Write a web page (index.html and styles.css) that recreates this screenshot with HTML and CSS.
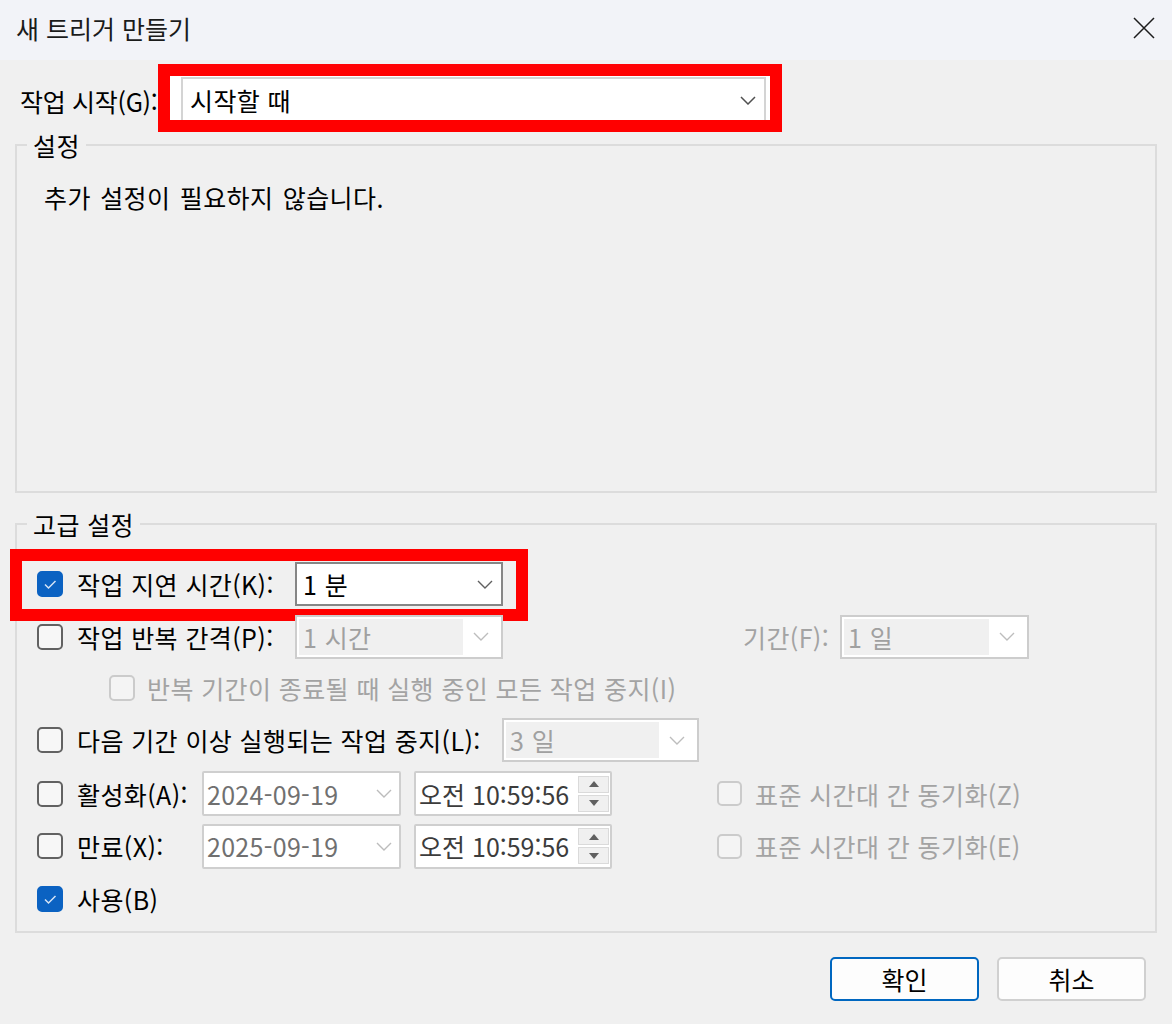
FILE: index.html
```html
<!DOCTYPE html>
<html lang="ko">
<head>
<meta charset="utf-8">
<title>새 트리거 만들기</title>
<link rel="stylesheet" href="styles.css">
</head>
<body>
<div class="dialog">
  <header class="titlebar">
    <span class="title">새 트리거 만들기</span>
    <svg class="close" width="22" height="22" viewBox="0 0 22 22"><path d="M1 1 L21 21 M21 1 L1 21" stroke="#1c1c1c" stroke-width="1.5" fill="none"/></svg>
  </header>
  <main class="content">
    <div class="start-row">
      <span class="start-label">작업 시작(G):</span>
      <div class="hl-combo">
        <div class="combo-main">
          <span>시작할 때</span>
          <svg class="chev" width="16" height="9" viewBox="0 0 16 9"><path d="M1 1 L8 8 L15 1" stroke="#505050" stroke-width="1.5" fill="none"/></svg>
        </div>
      </div>
    </div>

    <fieldset class="group group-settings">
      <legend>설정</legend>
      <div class="group-body settings-body">
        <p class="note">추가 설정이 필요하지 않습니다.</p>
      </div>
    </fieldset>

    <fieldset class="group group-adv">
      <legend>고급 설정</legend>
      <div class="group-body adv-body">
        <div class="row r1">
          <span class="cb checked"><svg width="22" height="22" viewBox="0 0 22 22"><path d="M6 11.5 L9.5 15 L16.5 8" stroke="#d6e4f5" stroke-width="1.5" fill="none"/></svg></span>
          <span class="lbl w-delay">작업 지연 시간(K):</span>
          <div class="combo combo-delay">
            <span>1 분</span>
            <svg class="chev" width="16" height="9" viewBox="0 0 16 9"><path d="M1 1 L8 8 L15 1" stroke="#606060" stroke-width="1.4" fill="none"/></svg>
          </div>
          <div class="hl-row"></div>
        </div>

        <div class="row r2">
          <span class="cb"></span>
          <span class="lbl w-delay">작업 반복 간격(P):</span>
          <div class="combo dis w208">
            <span class="field">1 시간</span>
            <span class="chev-area"><svg width="16" height="9" viewBox="0 0 16 9"><path d="M1 1 L8 8 L15 1" stroke="#bdbdbd" stroke-width="1.4" fill="none"/></svg></span>
          </div>
          <span class="lbl gray w-period">기간(F):</span>
          <div class="combo dis w189">
            <span class="field">1 일</span>
            <span class="chev-area"><svg width="16" height="9" viewBox="0 0 16 9"><path d="M1 1 L8 8 L15 1" stroke="#bdbdbd" stroke-width="1.4" fill="none"/></svg></span>
          </div>
        </div>

        <div class="row r3">
          <span class="cb disabled"></span>
          <span class="lbl gray">반복 기간이 종료될 때 실행 중인 모든 작업 중지(I)</span>
        </div>

        <div class="row r4">
          <span class="cb"></span>
          <span class="lbl w-stop">다음 기간 이상 실행되는 작업 중지(L):</span>
          <div class="combo dis w197">
            <span class="field">3 일</span>
            <span class="chev-area"><svg width="16" height="9" viewBox="0 0 16 9"><path d="M1 1 L8 8 L15 1" stroke="#bdbdbd" stroke-width="1.4" fill="none"/></svg></span>
          </div>
        </div>

        <div class="row r5">
          <span class="cb"></span>
          <span class="lbl w-date">활성화(A):</span>
          <div class="date">
            <span class="num">2024-09-19</span>
            <svg width="16" height="9" viewBox="0 0 16 9"><path d="M1 1 L8 8 L15 1" stroke="#bcbcbc" stroke-width="1.4" fill="none"/></svg>
          </div>
          <div class="time">
            <span class="num">오전 10:59:56</span>
            <span class="spin">
              <span class="spin-btn"><svg width="10" height="6" viewBox="0 0 10 6"><path d="M0 6 L5 0 L10 6 Z" fill="#606060"/></svg></span>
              <span class="spin-btn"><svg width="10" height="6" viewBox="0 0 10 6"><path d="M0 0 L5 6 L10 0 Z" fill="#606060"/></svg></span>
            </span>
          </div>
          <span class="cb disabled sync"></span>
          <span class="lbl gray">표준 시간대 간 동기화(Z)</span>
        </div>

        <div class="row r6">
          <span class="cb"></span>
          <span class="lbl w-date">만료(X):</span>
          <div class="date">
            <span class="num">2025-09-19</span>
            <svg width="16" height="9" viewBox="0 0 16 9"><path d="M1 1 L8 8 L15 1" stroke="#bcbcbc" stroke-width="1.4" fill="none"/></svg>
          </div>
          <div class="time">
            <span class="num">오전 10:59:56</span>
            <span class="spin">
              <span class="spin-btn"><svg width="10" height="6" viewBox="0 0 10 6"><path d="M0 6 L5 0 L10 6 Z" fill="#606060"/></svg></span>
              <span class="spin-btn"><svg width="10" height="6" viewBox="0 0 10 6"><path d="M0 0 L5 6 L10 0 Z" fill="#606060"/></svg></span>
            </span>
          </div>
          <span class="cb disabled sync"></span>
          <span class="lbl gray">표준 시간대 간 동기화(E)</span>
        </div>

        <div class="row r7">
          <span class="cb checked"><svg width="22" height="22" viewBox="0 0 22 22"><path d="M6 11.5 L9.5 15 L16.5 8" stroke="#d6e4f5" stroke-width="1.5" fill="none"/></svg></span>
          <span class="lbl">사용(B)</span>
        </div>
      </div>
    </fieldset>

    <div class="buttons">
      <button class="btn btn-primary">확인</button>
      <button class="btn">취소</button>
    </div>
  </main>
</div>
</body>
</html>
```
FILE: styles.css
```css
* { box-sizing: border-box; }
html, body { margin: 0; padding: 0; }
body {
  width: 1172px;
  height: 1024px;
  overflow: hidden;
  background: #f0f0f0;
  font-family: "Noto Sans CJK KR", "Noto Sans", sans-serif;
  font-size: 25px;
  letter-spacing: 0.4px;
  color: #000;
}

.titlebar {
  height: 60px;
  background: #f2f3f8;
  display: flex;
  align-items: center;
  justify-content: space-between;
  padding: 0 17px 4px 16px;
}
.title {
  line-height: 24px;
  letter-spacing: 0;
  color: #1b1b1b;
}
.close { display: block; }

.content { padding: 4px 15px 0; }

.start-row {
  display: flex;
  align-items: center;
  margin-left: 5px;
}
.start-label {
  width: 138px;
  line-height: 24px;
  padding-top: 6px;
  white-space: nowrap;
  letter-spacing: -0.3px;
}
.hl-combo {
  width: 624px;
  height: 68px;
  border: 12px solid #ff0000;
  background: #fff;
  overflow: hidden;
  padding: 1px 4px 0 11px;
}
.combo-main {
  height: 46px;
  border: 2px solid #d4d4d4;
  background: #fff;
  display: flex;
  align-items: center;
  justify-content: space-between;
  padding: 0 8px 0 7px;
  line-height: 24px;
}
.chev { display: block; }

.group {
  margin: 0;
  padding: 0;
  min-width: 0;
  border: 2px solid #dcdcdc;
}
.group legend {
  margin-left: 10px;
  padding: 0 6px;
  line-height: 24px;
}
.group-settings { margin-top: 1px; }
.settings-body {
  height: 334px;
  padding: 25px 0 0 27px;
}
.note { margin: 0; line-height: 30px; word-spacing: 2px; }

.group-adv { margin-top: 19px; }
.adv-body {
  height: 395px;
  padding: 21px 0 0 20px;
  display: flex;
  flex-direction: column;
}

.row {
  display: flex;
  align-items: center;
  position: relative;
}
.r1 { height: 54px; }
.r2 { height: 51px; }
.r3 { height: 51px; padding-left: 72px; }
.r4 { height: 54px; }
.r5 { height: 53px; }
.r6 { height: 52px; }
.r7 { height: 54px; }

.cb {
  flex: none;
  width: 26px;
  height: 26px;
  border: 2px solid #626262;
  border-radius: 5px;
  background: #f7f7f7;
  margin-right: 14px;
  display: flex;
  align-items: center;
  justify-content: center;
}
.cb svg { display: block; }
.cb.checked { background: #0b62c2; border-color: #0b62c2; }
.cb.disabled { border-color: #cbcbcb; background: #f4f4f4; }
.r3 .cb { margin-right: 12px; }
.cb.sync { width: 25px; height: 25px; margin-left: 105px; margin-right: 13px; }

.lbl { line-height: 24px; white-space: nowrap; flex: none; }
.gray { color: #a3a3a3; }
.w-delay { width: 218px; }
.w-period { width: 97px; margin-left: 240px; }
.w-stop { width: 425px; }
.w-date { width: 125px; }

.combo {
  flex: none;
  height: 44px;
  border: 2px solid #cdcdcd;
  background: #fff;
  display: flex;
  line-height: 24px;
}
.combo-delay {
  width: 208px;
  border-color: #868686;
  align-items: center;
  justify-content: space-between;
  padding: 0 8px 0 6px;
}
.combo.dis { padding: 2px; }
.w208 { width: 208px; }
.w189 { width: 189px; }
.w197 { width: 197px; }
.field {
  flex: 1;
  background: #f0f0f0;
  color: #a0a0a0;
  display: flex;
  align-items: center;
  padding-left: 4px;
}
.chev-area {
  width: 36px;
  flex: none;
  display: flex;
  align-items: center;
  justify-content: center;
}
.chev-area svg { display: block; }

.date, .time {
  flex: none;
  height: 45px;
  border: 2px solid #cfcfcf;
  border-radius: 2px;
  background: #fff;
  display: flex;
  align-items: center;
  justify-content: space-between;
  line-height: 24px;
}
.date {
  width: 199px;
  padding: 0 7px 0 3px;
  color: #707070;
}
.date .num { letter-spacing: 0.3px; }
.date svg { display: block; }
.time {
  width: 198px;
  margin-left: 13px;
  padding: 0 1px 0 3px;
  color: #3c3c3c;
}
.time .num { letter-spacing: 0; }
.spin {
  width: 31px;
  display: flex;
  flex-direction: column;
  gap: 2px;
}
.spin-btn {
  height: 17px;
  border: 1.5px solid #dadada;
  background: #f0f0f0;
  display: flex;
  align-items: center;
  justify-content: center;
}
.spin-btn svg { display: block; }

.hl-row {
  position: absolute;
  left: -27px;
  top: -8px;
  width: 518px;
  height: 72px;
  border: 12px solid #ff0000;
  pointer-events: none;
}

.buttons {
  display: flex;
  justify-content: flex-end;
  gap: 18px;
  margin-top: 24px;
  padding-right: 11px;
}
.btn {
  width: 149px;
  height: 44px;
  border: 2px solid #d0d0d0;
  border-radius: 5px;
  background: #fdfdfd;
  font: inherit;
  line-height: 24px;
  color: #000;
  padding: 0;
}
.btn-primary { border-color: #0067c0; }
```
